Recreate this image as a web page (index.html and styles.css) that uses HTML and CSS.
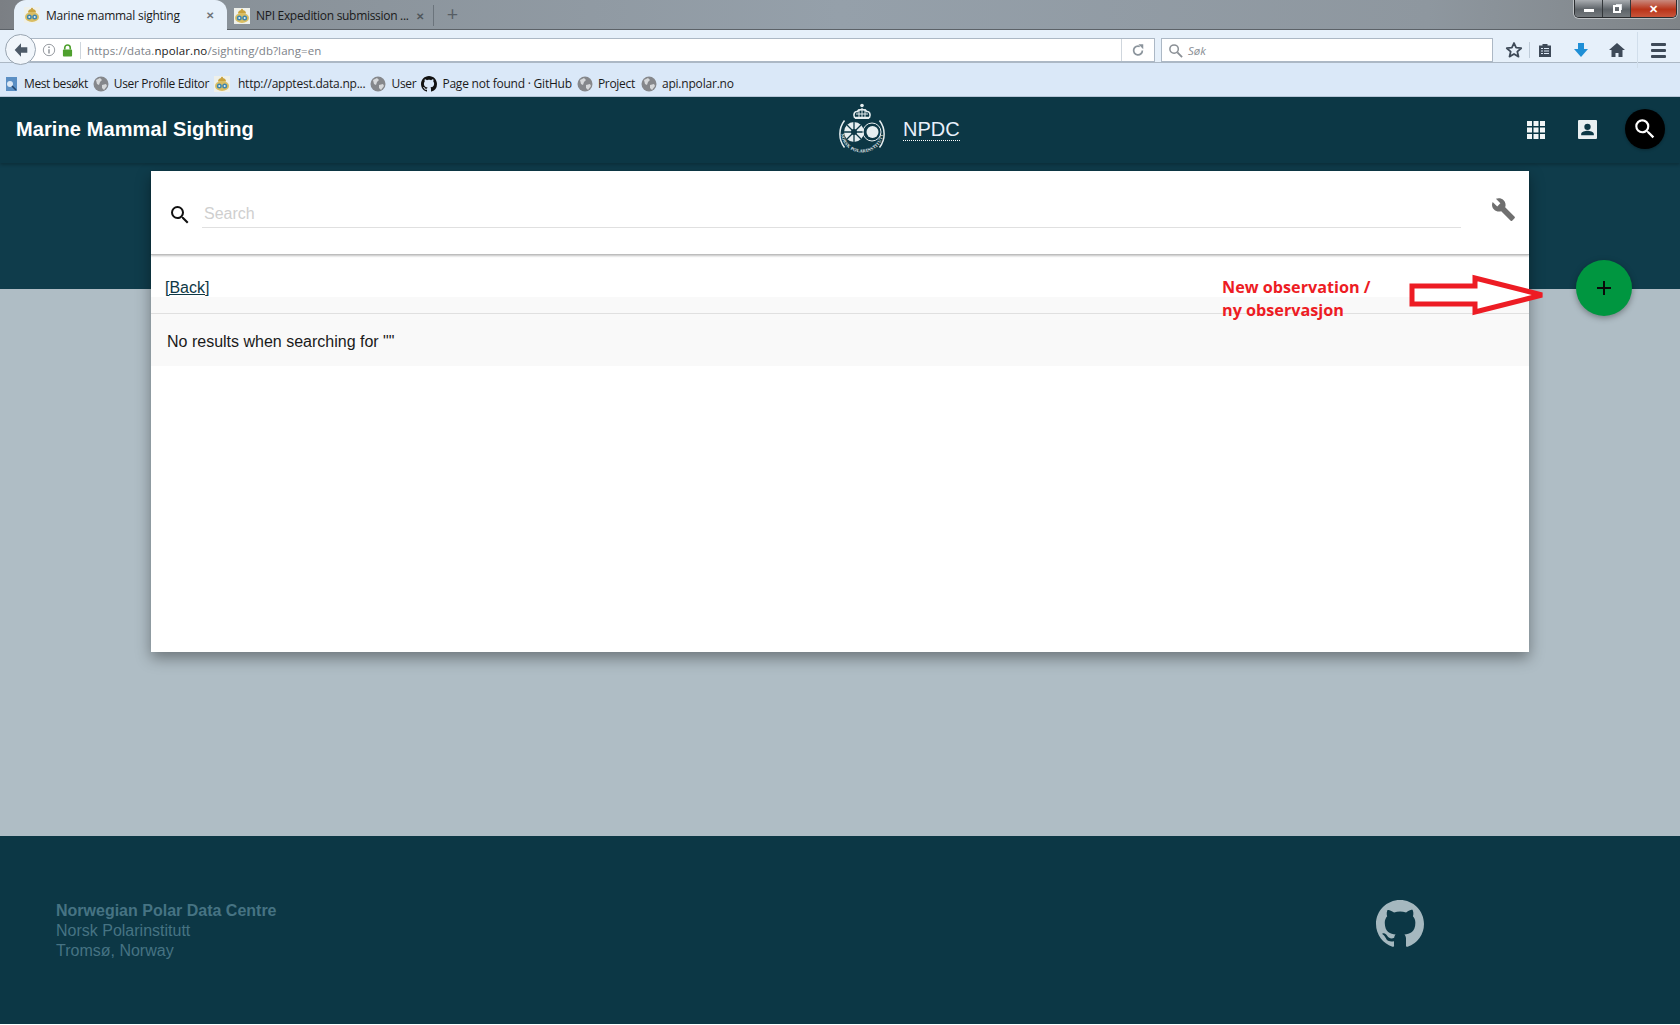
FILE: index.html
```html
<!DOCTYPE html>
<html lang="en">
<head>
<meta charset="utf-8">
<title>Marine mammal sighting</title>
<link rel="stylesheet" href="styles.css">
</head>
<body>
<svg class="defs" aria-hidden="true">
  <defs>
    <symbol id="fav" viewBox="0 0 16 16">
      <rect width="16" height="16" fill="#eef0ea"/>
      <path d="M4 5.500a4 3.500 0 0 1 8 0z" fill="#c9a23c"/>
      <circle cx="8" cy="1.800" r="1" fill="#c9a23c"/>
      <ellipse cx="8" cy="10" rx="7" ry="5" fill="#d9bd62"/>
      <circle cx="5.300" cy="10" r="2.500" fill="#3d86ad"/>
      <circle cx="10.700" cy="10" r="2.500" fill="#3d86ad"/>
      <circle cx="5.300" cy="10" r="1" fill="#e9eef0"/>
      <circle cx="10.700" cy="10" r="1" fill="#e9eef0"/>
    </symbol>
    <symbol id="globe" viewBox="0 0 16 16">
      <circle cx="8" cy="8" r="7.500" fill="#85878b"/>
      <path d="M3 4l4-2 2 2-2 2-1 3-2-1zM9 9l4-1 1 2-3 4-2-2z" fill="#d6d8da"/>
    </symbol>
    <symbol id="octo" viewBox="0 0 16 16">
      <path fill-rule="evenodd" d="M8 0C3.58 0 0 3.58 0 8c0 3.54 2.29 6.53 5.47 7.59.4.07.55-.17.55-.38 0-.19-.01-.82-.01-1.49-2.01.37-2.53-.49-2.69-.94-.09-.23-.48-.94-.82-1.13-.28-.15-.68-.52-.01-.53.63-.01 1.08.58 1.23.82.72 1.21 1.87.87 2.33.66.07-.52.28-.87.51-1.07-1.78-.2-3.64-.89-3.64-3.95 0-.87.31-1.59.82-2.15-.08-.2-.36-1.02.08-2.12 0 0 .67-.21 2.2.82.64-.18 1.32-.27 2-.27s1.36.09 2 .27c1.53-1.04 2.2-.82 2.2-.82.44 1.1.16 1.92.08 2.12.51.56.82 1.27.82 2.15 0 3.07-1.87 3.75-3.65 3.95.29.25.54.73.54 1.48 0 1.07-.01 1.93-.01 2.2 0 .21.15.46.55.38A8.01 8.01 0 0 0 16 8c0-4.42-3.58-8-8-8z"/>
    </symbol>
    <symbol id="mag" viewBox="0 0 24 24">
      <path d="M15.500 14h-.79l-.28-.27A6.470 6.470 0 0 0 16 9.500 6.500 6.500 0 1 0 9.500 16c1.610 0 3.090-.59 4.230-1.570l.27.28v.79l5 4.990L20.490 19l-4.990-5zm-6 0C7.010 14 5 11.990 5 9.500S7.010 5 9.500 5 14 7.010 14 9.500 11.990 14 9.500 14z"/>
    </symbol>
  </defs>
</svg>

<div class="browser">
  <div class="tabbar">
    <div class="tab tab-active">
      <svg class="ico16"><use href="#fav"/></svg>
      <span class="tab-title">Marine mammal sighting</span>
      <span class="tab-close">✕</span>
    </div>
    <div class="tab tab-idle">
      <svg class="ico16"><use href="#fav"/></svg>
      <span class="tab-title">NPI Expedition submission ...</span>
      <span class="tab-close">✕</span>
    </div>
    <span class="tab-new">+</span>
    <div class="winctl">
      <span class="win-btn win-min"><i></i></span>
      <span class="win-btn win-max"><i></i></span>
      <span class="win-btn win-close">✕</span>
    </div>
  </div>

  <div class="navbar">
    <span class="back">
      <svg viewBox="0 0 20 20" width="18" height="18"><path d="M10 2.500 3 10l7 7.500V13h7V7h-7z" fill="#4d5a68"/></svg>
    </span>
    <div class="urlbar">
      <svg class="url-info" viewBox="0 0 16 16" width="14" height="14"><circle cx="8" cy="8" r="6.500" fill="none" stroke="#8a8f95"/><path d="M7.200 4h1.600v1.600H7.200zM7.200 7h1.600v5H7.200z" fill="#8a8f95"/></svg>
      <svg class="url-lock" viewBox="0 0 12 14" width="11" height="13"><path d="M3 6V4a3 3 0 0 1 6 0v2" fill="none" stroke="#4fa02e" stroke-width="1.800"/><rect x="1" y="6" width="10" height="7.500" rx="1" fill="#4fa02e"/></svg>
      <span class="url-text">https://data.<b>npolar.no</b>/sighting/db?lang=en</span>
      <span class="url-reload">
        <svg viewBox="0 0 16 16" width="14" height="14"><path d="M13 8.500A5 5 0 1 1 10 4" fill="none" stroke="#8b949c" stroke-width="2"/><path d="M8.500 1.500h5.500V7z" fill="#8b949c"/></svg>
      </span>
    </div>
    <div class="searchbar">
      <svg viewBox="0 0 16 16" width="15" height="15"><circle cx="6.500" cy="6.500" r="4.500" fill="none" stroke="#8a8f95" stroke-width="1.600"/><path d="m10 10 5 5" stroke="#8a8f95" stroke-width="2"/></svg>
      <span class="search-ph">Søk</span>
    </div>
    <div class="tools">
      <svg class="tool" viewBox="0 0 18 18" width="18" height="18"><path d="m9 2 2.100 4.700 5.100.5-3.900 3.400 1.200 5L9 13l-4.500 2.600 1.200-5-3.900-3.400 5.100-.5z" fill="none" stroke="#3e4a58" stroke-width="1.800" stroke-linejoin="round"/></svg>
      <span class="tool-sep"></span>
      <svg class="tool tool-clip" viewBox="0 0 16 16" width="16" height="16"><path d="M2 3.500h3.500V2h5v1.500H14V15H2z" fill="#3e4a58"/><path d="M4 6.500h2M7 6.500h5M4 9h2M7 9h5M4 11.500h2M7 11.500h5" stroke="#dce8f5" stroke-width="1"/></svg>
      <svg class="tool tool-dl" viewBox="0 0 16 16" width="16" height="16"><path d="M5 1h6v6h4l-7 8-7-8h4z" fill="#1f8fd6"/></svg>
      <svg class="tool tool-home" viewBox="0 0 18 16" width="18" height="16"><path d="M9 1 1 8h2.500v7H7.500v-4h3v4h4V8H17z" fill="#3e4a58"/></svg>
      <span class="tool-sep tool-sep-tall"></span>
      <span class="burger"><i></i><i></i><i></i></span>
    </div>
  </div>

  <div class="bookmarks">
    <span class="bm bm-first"><svg class="ico14" viewBox="0 0 14 14"><rect x="2" y="0" width="11" height="14" fill="#5b8fc4"/><circle cx="6" cy="7" r="3" fill="#dce8f5"/><path d="m8 9 4 4" stroke="#24466d" stroke-width="1.600"/></svg>Mest besøkt</span>
    <span class="bm bm-profile"><svg class="ico16"><use href="#globe"/></svg>User Profile Editor</span>
    <span class="bm bm-wide"><svg class="ico16"><use href="#fav"/></svg>http://apptest.data.np...</span>
    <span class="bm"><svg class="ico16"><use href="#globe"/></svg>User</span>
    <span class="bm bm-tight"><svg class="ico16 octo-dark"><use href="#octo"/></svg>Page not found · GitHub</span>
    <span class="bm"><svg class="ico16"><use href="#globe"/></svg>Project</span>
    <span class="bm"><svg class="ico16"><use href="#globe"/></svg>api.npolar.no</span>
  </div>
</div>

<header class="appbar">
  <h1 class="app-title">Marine Mammal Sighting</h1>
  <div class="brand">
    <svg class="crest" viewBox="0 0 52 52" width="52" height="52">
      <path d="M18.500 14.500c-1.500-3 0-6.500 3-6 1-2.500 8-2.500 9 0 3-.5 4.500 3 3 6z" fill="none" stroke="#e6eef0" stroke-width="1.600"/>
      <path d="M23 6v8M26 5v9M29 6v8M20 11h12" stroke="#e6eef0" stroke-width="1"/>
      <circle cx="26" cy="2.500" r="1.800" fill="#e6eef0"/>
      <path d="M19 14h14v2H19z" fill="#e6eef0"/>
      <path d="M8.500 17.500a22 22 0 0 0 0 27M43.500 17.500a22 22 0 0 1 0 27" fill="none" stroke="#e6eef0" stroke-width="1.500"/>
      <path id="crest-arc" d="M5 30a21 19.500 0 0 0 42 0" fill="none"/>
      <text class="crest-text"><textPath href="#crest-arc" startOffset="50%" text-anchor="middle">NORSK POLARINSTITUTT</textPath></text>
      <circle cx="18" cy="29" r="10" fill="#e6eef0"/>
      <path d="M18 19v20M8 29h20M11 22l14 14M25 22 11 36" stroke="#0e3846" stroke-width="1.300"/>
      <circle cx="18" cy="29" r="3" fill="#0e3846"/>
      <circle cx="36" cy="29" r="9" fill="none" stroke="#e6eef0"/>
      <circle cx="36.500" cy="29" r="6" fill="#e6eef0"/>
    </svg>
    <a class="brand-link">NPDC</a>
  </div>
  <div class="app-actions">
    <svg class="app-ico app-grid" viewBox="0 0 18 18" width="18" height="18"><path d="M0 0h5v5H0zM6.500 0h5v5h-5zM13 0h5v5h-5zM0 6.500h5v5H0zM6.500 6.500h5v5h-5zM13 6.500h5v5h-5zM0 13h5v5H0zM6.500 13h5v5h-5zM13 13h5v5h-5z" fill="#f2f5f6"/></svg>
    <svg class="app-ico app-user" viewBox="0 0 18 18" width="19" height="19"><path fill-rule="evenodd" d="M1 0h16a1 1 0 0 1 1 1v16a1 1 0 0 1-1 1H1a1 1 0 0 1-1-1V1a1 1 0 0 1 1-1zm8 3.500a3 3 0 1 0 0 6 3 3 0 0 0 0-6zM3 14.500h12v-1.300c0-2-4-3-6-3s-6 1-6 3z" fill="#e9eff1"/></svg>
    <span class="app-search"><svg viewBox="0 0 24 24" width="26" height="26" fill="#fff"><use href="#mag"/></svg></span>
  </div>
</header>

<main class="content">
  <section class="card">
    <div class="card-search">
      <svg class="search-ico" viewBox="0 0 24 24" width="24" height="24" fill="#111"><use href="#mag"/></svg>
      <div class="search-field">Search</div>
      <svg class="wrench" viewBox="0 0 24 24" width="25" height="25"><path fill="#6f6f6f" d="M22.700 19 13.600 9.900c.9-2.300.4-5-1.500-6.900-2-2-5-2.400-7.400-1.300L9 6 6 9 1.600 4.700C.4 7.100.9 10.100 2.900 12.100c1.900 1.900 4.600 2.400 6.900 1.500l9.100 9.100c.4.400 1 .4 1.400 0l2.300-2.300c.5-.4.500-1.100.1-1.400z"/></svg>
    </div>
    <div class="card-body">
      <div class="back-row"><a class="back-link">[Back]</a></div>
      <div class="results">No results when searching for ""</div>
    </div>
  </section>

  <div class="note">New observation /<br>ny observasjon</div>
  <svg class="note-arrow" viewBox="0 0 136 40" width="136" height="40"><path d="M2 11h63V3l67 17-67 17v-8H2z" fill="#fff" stroke="#ed1c24" stroke-width="5"/></svg>
  <button class="fab" type="button"><svg viewBox="0 0 24 24" width="24" height="24"><path d="M19 13h-6v6h-2v-6H5v-2h6V5h2v6h6z" fill="#0a0a0a"/></svg></button>
</main>

<footer class="footer">
  <div class="foot-text">
    <strong>Norwegian Polar Data Centre</strong>
    <span>Norsk Polarinstitutt</span>
    <span>Tromsø, Norway</span>
  </div>
  <svg class="foot-octo"><use href="#octo"/></svg>
</footer>
</body>
</html>
```

FILE: styles.css
```css
* { box-sizing: border-box; }
html, body { margin: 0; padding: 0; }
body {
  width: 1680px;
  height: 1025px;
  overflow: hidden;
  background: #fff;
  font-family: "Liberation Sans", Arial, sans-serif;
  display: flex;
  flex-direction: column;
}
.defs { display: none; }
.ico16 { width: 16px; height: 16px; flex: none; }
.ico14 { width: 14px; height: 14px; flex: none; }

/* browser chrome */
.browser { flex: none; font-family: "Open Sans", "Noto Sans", sans-serif; color: #1a1a1a; font-size: 12px; }
.tabbar {
  height: 30px;
  display: flex;
  align-items: stretch;
  padding-left: 14px;
  position: relative;
  background: linear-gradient(90deg, #7b7f84 0, #878f96 8%, #95a0aa 50%, #8e979f 85%, #7f8488 100%);
  border-bottom: 1px solid #5c6268;
}
.tab { display: flex; align-items: center; gap: 6px; }
.tab-active {
  width: 213px;
  height: 30px;
  padding: 0 13px 0 10px;
  background: #e6f0fa;
  border-radius: 12px 12px 0 0;
}
.tab-idle { width: 207px; padding: 0 9px 0 7px; border-right: 1px solid #6b747c; margin-top: 5px; margin-bottom: 3px; }
.tab-title { flex: 1; white-space: nowrap; letter-spacing: -.25px; }
.tab-idle .tab-title { letter-spacing: -.3px; }
.tab-close { font-size: 10px; font-weight: 700; color: #6f7479; }
.tab-idle .tab-close { color: #4f565c; }
.tab-new { width: 37px; text-align: center; font-size: 20px; line-height: 28px; color: #565d64; }
.winctl {
  margin-left: auto;
  margin-right: 3px;
  width: 103px;
  height: 18px;
  display: flex;
  border: 1px solid #2a2d30;
  border-top: 0;
  border-radius: 0 0 5px 5px;
  overflow: hidden;
  box-shadow: 0 0 0 1px rgba(255,255,255,.45);
}
.win-btn { width: 28px; flex: none; display: flex; align-items: center; justify-content: center; background: linear-gradient(#a9adb1, #5d6368 55%, #74797d); border-right: 1px solid #33373a; }
.win-close { width: 47px; flex: 1; background: linear-gradient(#c98a7e, #b93419 55%, #c9553b); color: #fff; font-size: 11px; font-weight: 700; border-right: 0; }
.win-min i { width: 10px; height: 3px; background: #fff; margin-top: 3px; }
.win-max i { width: 8px; height: 8px; border: 2px solid #fff; box-shadow: 2px -2px 0 -1px #dfe3e6; }

.navbar {
  height: 32px;
  display: flex;
  align-items: flex-start;
  background: #e6f0fa;
  padding-left: 5px;
  position: relative;
  z-index: 1;
}
.back {
  width: 31px;
  height: 31px;
  flex: none;
  border-radius: 50%;
  border: 1px solid #99a5b1;
  background: #f1f6fb;
  display: flex;
  align-items: center;
  justify-content: center;
  position: relative;
  z-index: 1;
  margin-top: 4px;
}
.urlbar {
  width: 1125px;
  height: 24px;
  margin-left: -6px;
  margin-top: 8px;
  padding-left: 12px;
  display: flex;
  align-items: center;
  background: #fff;
  border: 1px solid #acb8c5;
  border-left: 0;
  font-size: 11.500px;
  color: #7d8288;
}
.url-lock { margin-left: 6px; }
.url-text { margin-left: 7px; padding-left: 6px; border-left: 1px solid #cfd6dd; flex: 1; line-height: 17px; letter-spacing: .1px; }
.url-text b { font-weight: 400; color: #1a1a1a; }
.url-reload { width: 33px; height: 100%; border-left: 1px solid #cfd6dd; display: flex; align-items: center; justify-content: center; }
.searchbar {
  width: 332px;
  height: 24px;
  margin-left: 6px;
  margin-top: 8px;
  padding-left: 6px;
  display: flex;
  align-items: center;
  gap: 5px;
  background: #fff;
  border: 1px solid #acb8c5;
  font-size: 11.500px;
}
.search-ph { font-style: italic; color: #8a8f95; }
.tools { display: flex; align-items: center; margin: 8px 0 0 12px; height: 24px; }
.tool-sep { width: 1px; height: 16px; background: #bfccd9; margin: 0 7px 0 6px; }
.tool-sep-tall { height: 36px; margin: -6px 12px 0 11px; align-self: flex-start; background: #d1deeb; }
.tool-dl { margin-left: 20px; }
.tool-home { margin-left: 19px; }
.burger { width: 15px; margin-left: 1px; display: flex; flex-direction: column; gap: 3px; }
.burger i { height: 3px; background: #3e4a58; border-radius: 1px; }

.bookmarks {
  height: 35px;
  display: flex;
  align-items: center;
  gap: 5px;
  padding: 8px 0 0 4px;
  background: #dae8f8;
  border-top: 1px solid #acb8c5;
  border-bottom: 1px solid #b9c9da;
}
.bm { display: flex; align-items: center; gap: 5px; white-space: nowrap; letter-spacing: -.3px; }
.bm-first { gap: 6px; letter-spacing: -.4px; }
.bm-profile { letter-spacing: -.36px; }
.bm-wide { gap: 8px; letter-spacing: -.22px; }
.bm-tight { gap: 5px; letter-spacing: -.22px; }
.bm:last-child { letter-spacing: -.2px; margin-left: 1px; }
.octo-dark { fill: #111; }

/* app header */
.appbar {
  flex: none;
  height: 66px;
  background: #0c3745;
  display: flex;
  align-items: center;
  padding: 0 15px 2px 16px;
  position: relative;
  box-shadow: 0 2px 3px rgba(0,0,0,.22);
  z-index: 2;
}
.app-title { margin: 0; color: #fff; font-size: 20px; font-weight: 700; letter-spacing: .1px; }
.brand {
  position: absolute;
  left: 836px;
  top: 6px;
  display: flex;
  align-items: center;
  gap: 15px;
}
.crest-text { font-family: "Liberation Serif", serif; font-size: 4.500px; font-weight: 700; fill: #e6eef0; letter-spacing: .2px; }
.brand-link { color: #e8f0fb; font-size: 20px; border-bottom: 1px dotted #fff; line-height: 22px; }
.app-actions { margin-left: auto; display: flex; align-items: center; padding-top: 2px; }
.app-ico { margin-right: 30px; }
.app-grid { margin-right: 33px; margin-left: -3px; }
.app-user { margin-right: 28px; margin-top: -1px; }
.app-search { width: 40px; height: 40px; margin-top: -2px; border-radius: 50%; background: #000; display: flex; align-items: center; justify-content: center; box-shadow: 0 1px 3px rgba(0,0,0,.3); }

/* content */
.content {
  flex: none;
  height: 673px;
  position: relative;
  padding: 8px 151px 0;
  background: linear-gradient(#0f3c4b 0, #0f3c4b 126px, #afbdc5 126px, #afbdc5 100%);
}
.card {
  width: 1378px;
  height: 481px;
  background: #fff;
  box-shadow: 0 6px 14px rgba(0,0,0,.38);
}
.card-search {
  height: 84px;
  border-bottom: 1px solid #bdbdbd;
  box-shadow: 0 1px 2px rgba(0,0,0,.25);
  position: relative;
  display: flex;
  align-items: flex-start;
}
.search-ico { position: absolute; left: 17px; top: 32px; }
.search-field {
  width: 1259px;
  height: 57px;
  margin-left: 51px;
  padding-top: 33px;
  border-bottom: 1px solid #e0e0e0;
  color: #cfcfcf;
  font-size: 16px;
  line-height: 20px;
  padding-left: 2px;
}
.wrench { position: absolute; right: 13px; top: 26px; }
.card-body { position: relative; }
.back-row { height: 42px; padding: 24px 14px 0; font-size: 16px; line-height: 18px; }
.back-link { color: #0e3846; text-decoration: underline; }
.results {
  height: 69px;
  padding-top: 35px;
  font-size: 16px;
  line-height: 20px;
  padding-left: 16px;
  color: #1a1a1a;
  background-color: #f9f9f9;
  background-image: linear-gradient(#f9f9f9 16px, #e0e0e0 16px, #e0e0e0 17px, #f9f9f9 17px);
}
.note {
  position: absolute;
  left: 1222px;
  top: 113px;
  font-family: "Open Sans", "Noto Sans", sans-serif;
  font-size: 16.200px;
  line-height: 23px;
  font-weight: 700;
  color: #ed1c24;
  white-space: nowrap;
}
.note-arrow { position: absolute; left: 1410px; top: 112px; overflow: visible; }
.fab {
  position: absolute;
  left: 1576px;
  top: 97px;
  width: 56px;
  height: 56px;
  padding: 0;
  border: 0;
  border-radius: 50%;
  background: #009640;
  display: flex;
  align-items: center;
  justify-content: center;
  box-shadow: 0 2px 6px rgba(0,0,0,.35);
}

/* footer */
.footer {
  flex: none;
  height: 188px;
  background: #0c3745;
  display: flex;
  align-items: flex-start;
  padding: 65px 0 0 56px;
  position: relative;
}
.foot-text { display: flex; flex-direction: column; font-size: 16px; line-height: 20px; color: #467383; }
.foot-text strong { font-weight: 700; }
.foot-octo { position: absolute; left: 1376px; top: 64px; width: 48px; height: 48px; fill: #a5b8bf; }
```
